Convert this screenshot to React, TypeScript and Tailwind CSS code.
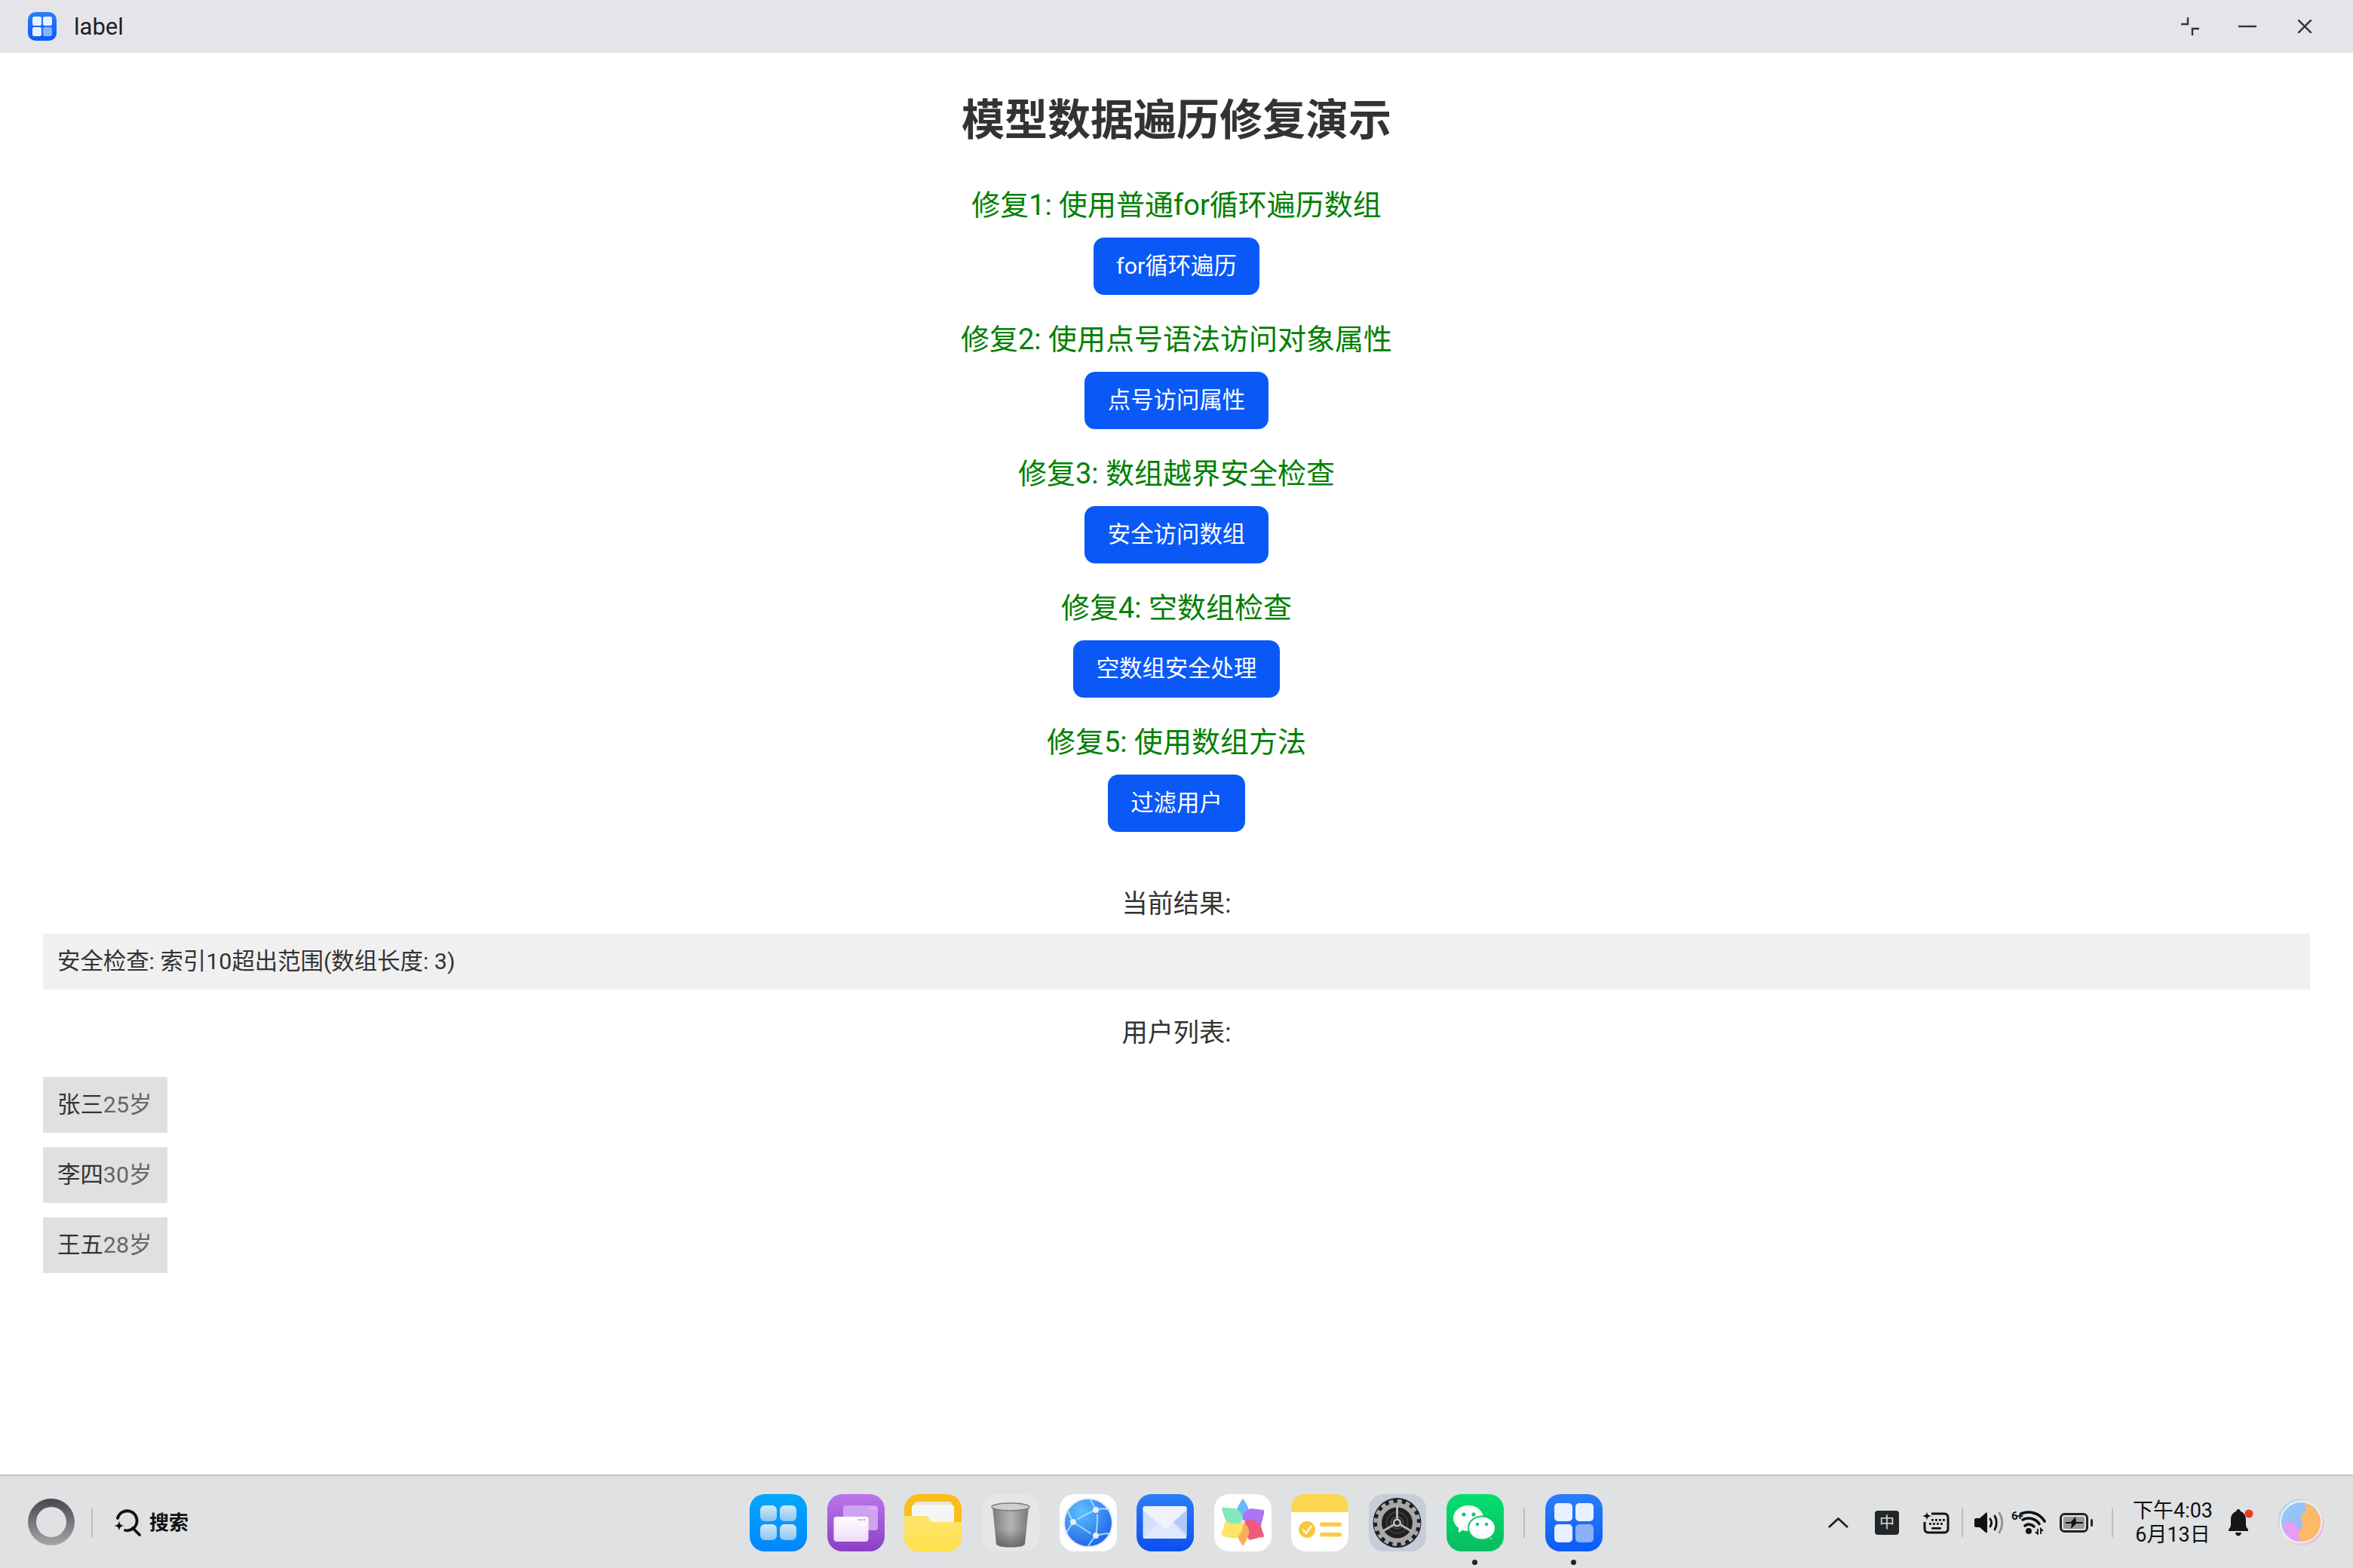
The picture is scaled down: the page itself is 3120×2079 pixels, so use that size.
const sections = [
  { title: '修复1: 使用普通for循环遍历数组', action: 'for循环遍历' },
  { title: '修复2: 使用点号语法访问对象属性', action: '点号访问属性' },
  { title: '修复3: 数组越界安全检查', action: '安全访问数组' },
  { title: '修复4: 空数组检查', action: '空数组安全处理' },
  { title: '修复5: 使用数组方法', action: '过滤用户' },
]

const users = [
  { name: '张三', age: '25岁' },
  { name: '李四', age: '30岁' },
  { name: '王五', age: '28岁' },
]

function AppIcon({ size = 76, id }: { size?: number; id: string }) {
  return (
    <svg width={size} height={size} viewBox="0 0 76 76">
      <defs>
        <linearGradient id={id} x1="0" y1="0" x2="0" y2="1">
          <stop offset="0" stopColor="#2b7ef8" />
          <stop offset="1" stopColor="#0b5bf6" />
        </linearGradient>
      </defs>
      <rect width="76" height="76" rx="20" fill={`url(#${id})`} />
      <rect x="12" y="12" width="24" height="24" rx="5" fill="#e8effe" />
      <rect x="40" y="12" width="24" height="24" rx="5" fill="#e8effe" />
      <rect x="12" y="40" width="24" height="24" rx="5" fill="#e8effe" />
      <rect x="40" y="40" width="24" height="24" rx="5" fill="#8ab0fa" />
    </svg>
  )
}

function LauncherIcon() {
  return (
    <svg width="76" height="76" viewBox="0 0 76 76">
      <defs>
        <linearGradient id="launcher-bg" x1="0" y1="0" x2="0" y2="1">
          <stop offset="0" stopColor="#00a8ff" />
          <stop offset="1" stopColor="#0086fb" />
        </linearGradient>
        <linearGradient id="launcher-tile" x1="0" y1="0" x2="0" y2="1">
          <stop offset="0" stopColor="#d4e9f8" />
          <stop offset="1" stopColor="#8cc4ef" />
        </linearGradient>
      </defs>
      <rect width="76" height="76" rx="20" fill="url(#launcher-bg)" />
      <rect x="14" y="15" width="22" height="21" rx="6" fill="url(#launcher-tile)" />
      <rect x="40" y="15" width="22" height="21" rx="6" fill="url(#launcher-tile)" />
      <rect x="14" y="40" width="22" height="21" rx="6" fill="url(#launcher-tile)" />
      <rect x="40" y="40" width="22" height="21" rx="6" fill="url(#launcher-tile)" />
    </svg>
  )
}

function WindowsIcon() {
  return (
    <svg width="76" height="76" viewBox="0 0 76 76">
      <defs>
        <linearGradient id="windows-bg" x1="0" y1="0" x2="0" y2="1">
          <stop offset="0" stopColor="#bc74eb" />
          <stop offset="1" stopColor="#8b3fc4" />
        </linearGradient>
        <linearGradient id="windows-front" x1="0" y1="0" x2="0" y2="1">
          <stop offset="0" stopColor="#ffffff" />
          <stop offset="1" stopColor="#efd9fa" />
        </linearGradient>
      </defs>
      <rect width="76" height="76" rx="20" fill="url(#windows-bg)" />
      <rect x="21" y="15" width="46" height="33" rx="4" fill="#cfa4ee" />
      <circle cx="56" cy="19" r="1.2" fill="#e3c5f5" />
      <circle cx="59.5" cy="19" r="1.2" fill="#e3c5f5" />
      <circle cx="63" cy="19" r="1.2" fill="#e3c5f5" />
      <rect x="8.5" y="30" width="46" height="33" rx="4" fill="url(#windows-front)" />
      <circle cx="42" cy="34" r="1.2" fill="#c58be6" />
      <circle cx="45.5" cy="34" r="1.2" fill="#c58be6" />
      <circle cx="49" cy="34" r="1.2" fill="#c58be6" />
    </svg>
  )
}

function FolderIcon() {
  return (
    <svg width="76" height="76" viewBox="0 0 76 76">
      <defs>
        <linearGradient id="folder-front" x1="0" y1="0" x2="0" y2="1">
          <stop offset="0" stopColor="#fce56e" />
          <stop offset="1" stopColor="#fee04c" />
        </linearGradient>
      </defs>
      <rect width="76" height="76" rx="20" fill="#fbbd1d" />
      <rect x="13" y="10" width="50" height="30" rx="4" fill="#ece4d8" />
      <rect x="10" y="14" width="56" height="30" rx="4" fill="#f5f5f5" />
      <path d="M0 29H28C31 29 32 31 34 34C35 36 37 37 39 37H76V56C76 69 69 76 56 76H20C7 76 0 69 0 56Z" fill="url(#folder-front)" />
    </svg>
  )
}

function TrashIcon() {
  return (
    <svg width="76" height="76" viewBox="0 0 76 76">
      <defs>
        <linearGradient id="trash-cup" x1="0" y1="0" x2="1" y2="0">
          <stop offset="0" stopColor="#7c7c7c" />
          <stop offset="0.5" stopColor="#b5b5b5" />
          <stop offset="1" stopColor="#7a7a7a" />
        </linearGradient>
        <linearGradient id="trash-shade" x1="0" y1="0" x2="0" y2="1">
          <stop offset="0.55" stopColor="#555555" stopOpacity="0" />
          <stop offset="1" stopColor="#555555" stopOpacity="0.75" />
        </linearGradient>
      </defs>
      <rect width="76" height="76" rx="20" fill="#e6e6e6" />
      <path d="M14 17L19 66C19.5 69 28 70.5 38 70.5C48 70.5 56.5 69 57 66L62 17Z" fill="url(#trash-cup)" />
      <path d="M14 17L19 66C19.5 69 28 70.5 38 70.5C48 70.5 56.5 69 57 66L62 17Z" fill="url(#trash-shade)" />
      <ellipse cx="38" cy="17" rx="25" ry="5" fill="#cfcfcf" stroke="#7d7d7d" strokeWidth="1.5" />
    </svg>
  )
}

function GlobeIcon() {
  return (
    <svg width="76" height="76" viewBox="0 0 76 76">
      <defs>
        <radialGradient id="globe-bg" cx="0.35" cy="0.25" r="0.85">
          <stop offset="0" stopColor="#5dc1fb" />
          <stop offset="1" stopColor="#1d5fe8" />
        </radialGradient>
      </defs>
      <rect width="76" height="76" rx="20" fill="#ffffff" />
      <circle cx="38" cy="38" r="33" fill="#cfdcfb" opacity="0.6" />
      <circle cx="38" cy="38" r="31" fill="url(#globe-bg)" />
      <g fill="none" stroke="#9fdcfb" strokeWidth="2" strokeLinecap="round">
        <path d="M48 21C46 16 43 11 41 8" />
        <path d="M48 21C54 19 61 19 66 21" />
        <path d="M48 21C40 24 34 27 24 33" />
        <path d="M18 37C14 30 12 26 11 21" />
        <path d="M18 37C26 42 32 46 41 52" />
        <path d="M18 37C14 43 11 47 9 52" />
        <path d="M50 27C50 36 50 44 48 55" />
        <path d="M48 55C44 60 40 65 38 69" />
        <path d="M48 55C54 54 60 52 66 52" />
      </g>
      <circle cx="48" cy="21" r="4" fill="#e4eef5" />
      <circle cx="18" cy="37" r="4" fill="#e4eef5" />
      <circle cx="48" cy="55" r="4" fill="#e4eef5" />
    </svg>
  )
}

function MailIcon() {
  return (
    <svg width="76" height="76" viewBox="0 0 76 76">
      <defs>
        <linearGradient id="mail-bg" x1="0" y1="0" x2="0" y2="1">
          <stop offset="0" stopColor="#2b7ff6" />
          <stop offset="1" stopColor="#0a4ff0" />
        </linearGradient>
      </defs>
      <rect width="76" height="76" rx="20" fill="url(#mail-bg)" />
      <rect x="8.5" y="16" width="58" height="43" rx="3" fill="#d3e0fb" />
      <path d="M8.5 59L30 36H46L66.5 59Z" fill="#e0e9fc" />
      <path d="M66.5 22V54L48 36Z" fill="#b3c8f8" />
      <path d="M8.5 19C8.5 17 10 16 11.5 16H63.5C65 16 66.5 17 66.5 19V21L41 44C39 45.5 37 45.5 35 44L8.5 21Z" fill="#f0f3fd" />
    </svg>
  )
}

function PhotosIcon() {
  return (
    <svg width="76" height="76" viewBox="0 0 76 76">
      <rect width="76" height="76" rx="20" fill="#ffffff" />
      <g opacity="0.85">
        <path d="M38 37C28 31 26 22 38 6C50 22 48 31 38 37Z" fill="#49b0f6" />
        <path d="M38 37C36 27 41 21 49 19L65 21C67 21 66 24 66 26L62 42C54 43 44 43 38 37Z" fill="#9f5cf2" />
        <path d="M38 37C46 33 54 34 61 40L66 55C66 57 64 58 62 57L47 61C41 54 37 45 38 37Z" fill="#ee3d63" />
        <path d="M38 37C48 43 50 52 38 69C26 52 28 43 38 37Z" fill="#f6a13f" />
        <path d="M38 37C39 47 35 55 28 59L12 56C10 55 10 53 10 51L15 36C22 32 32 32 38 37Z" fill="#fde14c" />
        <path d="M38 37C30 41 22 40 15 35L10 20C10 18 12 17 14 18L29 19C35 23 39 29 38 37Z" fill="#6ee6b2" />
      </g>
      <circle cx="38" cy="37" r="3" fill="#f3dcc5" />
    </svg>
  )
}

function NotesIcon() {
  return (
    <svg width="76" height="76" viewBox="0 0 76 76">
      <rect width="76" height="76" rx="20" fill="#ffffff" />
      <path d="M0 24V20C0 7 7 0 20 0H56C69 0 76 7 76 20V24Z" fill="#fbd650" />
      <ellipse cx="21" cy="47" rx="11" ry="11" fill="#f7c83c" />
      <path d="M15.5 47L20 52L27 42" fill="none" stroke="#fdf6dd" strokeWidth="2.5" />
      <rect x="38" y="37.5" width="29" height="5.5" rx="2.7" fill="#fbcb45" />
      <rect x="38" y="51" width="29" height="5.5" rx="2.7" fill="#fbcb45" />
    </svg>
  )
}

function SettingsIcon() {
  return (
    <svg width="76" height="76" viewBox="0 0 76 76">
      <rect width="76" height="76" rx="20" fill="#c6ccd8" />
      <ellipse cx="37.5" cy="38" rx="32" ry="33" fill="#1f1f20" />
      <circle cx="37.5" cy="38" r="28.5" fill="none" stroke="#a8a8a8" strokeWidth="5" strokeDasharray="6 5.2" />
      <circle cx="37.5" cy="38" r="23.5" fill="none" stroke="#a8a8a8" strokeWidth="6" />
      <circle cx="37.5" cy="38" r="14" fill="none" stroke="#3b3b3c" strokeWidth="2" />
      <circle cx="37.5" cy="38" r="8" fill="none" stroke="#4a4a4b" strokeWidth="2" />
      <g stroke="#b5b5b5" strokeWidth="3">
        <path d="M37.5 38V15" />
        <path d="M37.5 38L18 49.5" />
        <path d="M37.5 38L57 49.5" />
      </g>
      <circle cx="37.5" cy="38" r="5.5" fill="#c2c2c2" />
      <circle cx="37.5" cy="38" r="3" fill="#222222" />
    </svg>
  )
}

function WechatIcon() {
  return (
    <svg width="76" height="76" viewBox="0 0 76 76">
      <defs>
        <linearGradient id="wechat-bg" x1="0" y1="0" x2="0" y2="1">
          <stop offset="0" stopColor="#04e070" />
          <stop offset="1" stopColor="#08bc5e" />
        </linearGradient>
      </defs>
      <rect width="76" height="76" rx="20" fill="url(#wechat-bg)" />
      <path d="M16 44L16 51L25 46Z" fill="#ffffff" />
      <ellipse cx="29" cy="32" rx="20" ry="17" fill="#ffffff" />
      <path d="M57 52L60 60L51 56Z" fill="#ffffff" />
      <ellipse cx="47" cy="45" rx="18" ry="15.5" fill="#ffffff" stroke="#06cb66" strokeWidth="2" />
      <circle cx="23" cy="27" r="2.6" fill="#06cf68" />
      <circle cx="36" cy="27" r="2.6" fill="#06cf68" />
      <circle cx="41" cy="40" r="2.2" fill="#06cf68" />
      <circle cx="53" cy="40" r="2.2" fill="#06cf68" />
    </svg>
  )
}

function SearchIcon() {
  return (
    <svg width="36" height="36" viewBox="0 0 36 36" fill="none">
      <path d="M5 12A13 13 0 1 1 15 28" stroke="#111111" strokeWidth="3.8" strokeLinecap="round" />
      <path d="M25 25L34 34" stroke="#111111" strokeWidth="3.8" strokeLinecap="round" />
      <path d="M7 15C7.7 20 8.7 21.2 14 22C8.7 22.8 7.7 24 7 29C6.3 24 5.3 22.8 0 22C5.3 21.2 6.3 20 7 15Z" fill="#111111" />
    </svg>
  )
}

function KeyboardIcon() {
  return (
    <svg width="36" height="30" viewBox="0 0 36 30" fill="none">
      <path d="M12 3H29C32 3 34 5 34 8V23C34 26 32 28 29 28H8C5 28 3 26 3 23V14" stroke="#111111" strokeWidth="3" />
      <path d="M6 0C6.5 4 7.5 5 12 6C7.5 7 6.5 8 6 12C5.5 8 4.5 7 0 6C4.5 5 5.5 4 6 0Z" fill="#111111" />
      <g fill="#111111">
        <rect x="12" y="10" width="2.8" height="2.8" />
        <rect x="17" y="10" width="2.8" height="2.8" />
        <rect x="22" y="10" width="2.8" height="2.8" />
        <rect x="27" y="10" width="2.8" height="2.8" />
        <rect x="9" y="15" width="2.8" height="2.8" />
        <rect x="14" y="15" width="2.8" height="2.8" />
        <rect x="19" y="15" width="2.8" height="2.8" />
        <rect x="24" y="15" width="2.8" height="2.8" />
        <rect x="12" y="21" width="13" height="2.8" rx="1" />
      </g>
    </svg>
  )
}

function VolumeIcon() {
  return (
    <svg width="38" height="28" viewBox="0 0 38 28" fill="none">
      <path d="M0 10C0 9 1 8 2 8H7L15 1C16 0 17 1 17 2V26C17 27 16 28 15 27L7 20H2C1 20 0 19 0 18Z" fill="#111111" />
      <path d="M21 9C23 12 23 16 21 19" stroke="#111111" strokeWidth="2.8" strokeLinecap="round" />
      <path d="M27 5C30 10 30 18 27 23" stroke="#111111" strokeWidth="2.8" strokeLinecap="round" />
      <path d="M33 1C38 9 38 19 33 27" stroke="#8e8e8e" strokeWidth="2.8" strokeLinecap="round" />
    </svg>
  )
}

function WifiIcon() {
  return (
    <div className="relative h-[32px] w-[46px]">
      <svg width="46" height="32" viewBox="0 0 46 32" fill="none">
        <path d="M13 4A25 25 0 0 1 44 14" stroke="#111111" strokeWidth="3.6" strokeLinecap="round" />
        <path d="M15 12A17 17 0 0 1 37 17.5" stroke="#111111" strokeWidth="3.6" strokeLinecap="round" />
        <path d="M18 20A9 9 0 0 1 30 21" stroke="#111111" strokeWidth="3.6" strokeLinecap="round" />
        <circle cx="23" cy="27" r="4" fill="#111111" />
        <path d="M35 24V31L32 28M39 31V24L42 27" stroke="#111111" strokeWidth="1.8" />
      </svg>
      <span className="absolute left-0 top-0 text-[15px] font-bold leading-[15px] tracking-[-1px] text-[#111111]">6+</span>
    </div>
  )
}

function BatteryIcon() {
  return (
    <svg width="45" height="26" viewBox="0 0 45 26" fill="none">
      <rect x="1.5" y="1.5" width="35" height="23" rx="5" stroke="#222222" strokeWidth="3" />
      <rect x="5" y="5" width="28" height="16" rx="2" fill="#9a9a9a" />
      <path d="M21 5L15 12H8V14H16L15 21L22 14H31V12H22Z" fill="#111111" />
      <rect x="41" y="8" width="3" height="10" rx="1.5" fill="#222222" />
    </svg>
  )
}

function BellIcon() {
  return (
    <svg width="36" height="36" viewBox="0 0 36 36">
      <path d="M15 0C16.5 0 17.5 1 18 3C23 5 25 9 25 14V21C25 24 27 25 28 27V29H2V27C3 25 5 24 5 21V14C5 9 7 5 12 3C12.5 1 13.5 0 15 0Z" fill="#161616" />
      <path d="M11 31H19C18.5 34 17 35.5 15 35.5C13 35.5 11.5 34 11 31Z" fill="#161616" />
      <circle cx="29" cy="6" r="5.5" fill="#ee3b24" />
    </svg>
  )
}

function OrbIcon() {
  return (
    <svg width="62" height="62" viewBox="0 0 62 62">
      <defs>
        <linearGradient id="orb-ring" x1="0" y1="0" x2="1" y2="1">
          <stop offset="0" stopColor="#9fd4f8" />
          <stop offset="0.5" stopColor="#f1e6c8" />
          <stop offset="1" stopColor="#e0b0f0" />
        </linearGradient>
        <linearGradient id="orb-blue" x1="0" y1="0" x2="1" y2="1">
          <stop offset="0" stopColor="#8fd0fb" />
          <stop offset="1" stopColor="#a7a5fa" />
        </linearGradient>
      </defs>
      <circle cx="31" cy="31" r="29.5" fill="#f4eef0" stroke="url(#orb-ring)" strokeWidth="3" />
      <circle cx="31" cy="31" r="26" fill="url(#orb-blue)" />
      <path d="M34 5.5C44 7 57 18 57 31C57 46 46 57 31 57C27 57 24 55 24 51C24 44 34 42 33 32C32 27 29 24 34 20C39 16 38 9 34 5.5Z" fill="#fdb968" />
      <path d="M7 36C11 28 20 30 26 36C30 41 26 50 31 57C18 57 10 50 7 36Z" fill="#e79df2" />
    </svg>
  )
}

const dockIcons = [
  <LauncherIcon />,
  <WindowsIcon />,
  <FolderIcon />,
  <TrashIcon />,
  <GlobeIcon />,
  <MailIcon />,
  <PhotosIcon />,
  <NotesIcon />,
  <SettingsIcon />,
]

function Divider({ className }: { className: string }) {
  return <div className={`w-[2px] bg-[#bcbcbe] ${className}`} />
}

function RunningDot() {
  return <span className="absolute -bottom-[18px] left-[34px] h-[7px] w-[7px] rounded-full bg-[#222222]" />
}

export default function App() {
  return (
    <div className="flex h-[2079px] w-[3120px] flex-col overflow-hidden bg-white text-[30.4px] text-[#333333] [font-family:Roboto,'Noto_Sans_CJK_SC',sans-serif]">
      {/* Window title bar */}
      <header className="flex h-[70px] shrink-0 items-center bg-[#e5e4eb] pl-[37px] pr-[55px]">
        <AppIcon size={38} id="title-icon-bg" />
        <span className="ml-[23px] text-[31px] leading-none text-[#1f1f1f]">label</span>
        <div className="ml-auto flex items-center">
          <svg width="24" height="24" viewBox="0 0 24 24" fill="none" stroke="#333333" strokeWidth="2.4">
            <path d="M0 9H9V0" />
            <path d="M24 15H15V24" />
          </svg>
          <svg className="ml-[52px]" width="24" height="4" viewBox="0 0 24 4" fill="none" stroke="#333333" strokeWidth="2.4">
            <path d="M0 2H24" />
          </svg>
          <svg className="ml-[55px]" width="18" height="18" viewBox="0 0 18 18" fill="none" stroke="#333333" strokeWidth="2.4">
            <path d="M0 0L18 18M18 0L0 18" />
          </svg>
        </div>
      </header>

      {/* Demo page */}
      <main className="flex flex-1 flex-col items-center px-[57px] pt-[50px]">
        <h1 className="mb-[44px] text-[57px] font-bold leading-[80px]">模型数据遍历修复演示</h1>

        {sections.map(s => (
          <section key={s.title} className="mb-[31px] flex flex-col items-center">
            <h2 className="text-[38px] leading-[56px] text-[#008000]">{s.title}</h2>
            <button className="mt-[15px] h-[76px] rounded-[14px] bg-[#0a59f7] px-[30.4px] text-[30.4px] text-white">
              {s.action}
            </button>
          </section>
        ))}

        <p className="mt-[40px] text-[34.2px] leading-[48px]">当前结果:</p>
        <div className="mt-[16px] flex h-[74px] w-full items-center bg-[#f0f0f0] px-[19px]">
          安全检查: 索引10超出范围(数组长度: 3)
        </div>

        <p className="mt-[33px] text-[34.2px] leading-[48px]">用户列表:</p>
        <ul className="mt-[35px] flex w-full flex-col items-start gap-[19px]">
          {users.map(u => (
            <li key={u.name} className="flex h-[74px] w-[165px] items-center bg-[#e0e0e0] px-[19px]">
              {u.name}
              <span className="text-[#666666]">{u.age}</span>
            </li>
          ))}
        </ul>
      </main>

      {/* System task bar */}
      <footer className="flex h-[124px] shrink-0 items-center border-t-2 border-[#c5c5c8] bg-[#e0e1e3] pl-[37px] pr-[38px] pt-[2px]">
        <div className="flex flex-1 items-center">
          <div className="mb-[3px] h-[62px] w-[62px] rounded-full bg-gradient-to-b from-[#47484d] to-[#a8a8ab] p-[11px]">
            <div className="h-full w-full rounded-full bg-[#e0e1e3]" />
          </div>
          <Divider className="ml-[22px] h-[38px]" />
          <div className="ml-[28px]">
            <SearchIcon />
          </div>
          <span className="ml-[11px] text-[26px] font-bold text-[#111111]">搜索</span>
        </div>

        <div className="flex items-center gap-[26.6px]">
          {dockIcons.map((icon, i) => (
            <div key={i} className="h-[76px] w-[76px]">{icon}</div>
          ))}
          <div className="relative h-[76px] w-[76px]">
            <WechatIcon />
            <RunningDot />
          </div>
          <Divider className="h-[40px]" />
          <div className="relative h-[76px] w-[76px]">
            <AppIcon id="dock-app-bg" />
            <RunningDot />
          </div>
        </div>

        <div className="flex flex-1 items-center justify-end text-[#111111]">
          <svg width="27" height="14" viewBox="0 0 27 14" fill="none" stroke="#222222" strokeWidth="2.8">
            <path d="M1 13L13.5 1.5L26 13" />
          </svg>
          <div className="ml-[35px] flex h-[32px] w-[32px] items-center justify-center rounded-[4px] bg-[#262626] text-[20px] leading-none text-[#d8d8d8]">
            中
          </div>
          <div className="ml-[31px]"><KeyboardIcon /></div>
          <Divider className="ml-[16px] h-[38px]" />
          <div className="ml-[15px]"><VolumeIcon /></div>
          <div className="ml-[11px]"><WifiIcon /></div>
          <div className="ml-[18px]"><BatteryIcon /></div>
          <Divider className="ml-[24px] h-[38px]" />
          <div className="ml-[26px] flex w-[106px] flex-col items-center whitespace-nowrap text-[27px] leading-[32px]">
            <span>下午4:03</span>
            <span>6月13日</span>
          </div>
          <div className="ml-[19px]"><BellIcon /></div>
          <div className="mb-[3px] ml-[31px]"><OrbIcon /></div>
        </div>
      </footer>
    </div>
  )
}
